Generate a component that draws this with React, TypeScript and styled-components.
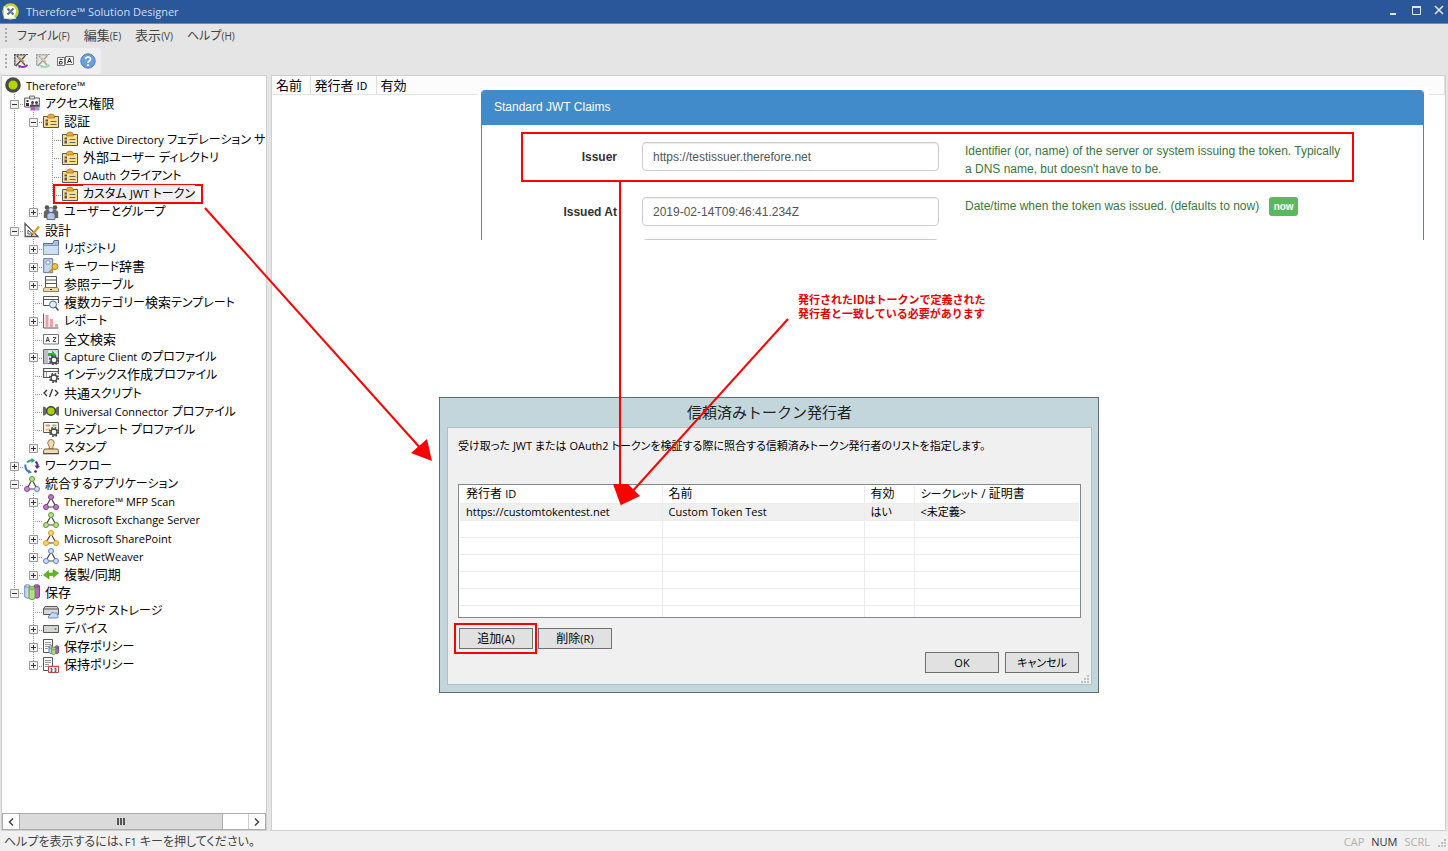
import React from "react";
import styled, { createGlobalStyle, css } from "styled-components";

const uiFont = `"Open Sans", "Noto Sans CJK JP", sans-serif`;
const jpFont = `"Noto Sans CJK JP", sans-serif`;
const webFont = `"Liberation Sans", Arial, sans-serif`;
const RED = "#ff0000";

const Global = createGlobalStyle`
  * { box-sizing: border-box; }
  body { margin: 0; font-family: ${uiFont}; font-size: 12px; color: #000; font-feature-settings: "palt"; }
  button, input { font: inherit; font-feature-settings: inherit; color: inherit; margin: 0; padding: 0; }
  svg { display: block; flex: none; }
`;

/* ---------- frame ---------- */

const Shell = styled.div`
  position: relative;
  display: flex;
  flex-direction: column;
  min-height: 100vh;
  background: #e5e5e5;
  overflow: hidden;
`;

const TitleBar = styled.header`
  display: flex;
  align-items: center;
  height: 24px;
  padding: 0 1px 0 2px;
  gap: 7px;
  background: #2a579a;
  border-bottom: 1px solid #6d8cbb;
  color: #d5deeb;
`;

const AppTitle = styled.h1`
  flex: 1;
  margin: 0;
  font-size: 11px;
  line-height: 16px;
  font-weight: 400;
`;

const WindowButtons = styled.div`
  display: flex;
  gap: 7px;
  padding-bottom: 4px;
`;

const WindowButton = styled.button`
  width: 16px;
  height: 16px;
  border: 0;
  background: none;
`;

const MenuBar = styled.nav`
  display: flex;
  align-items: center;
  height: 24px;
  padding: 0 0 2px 5px;
  gap: 14px;
`;

const MenuItem = styled.button`
  border: 0;
  background: none;
  font-family: ${jpFont};
  font-size: 13px;
  line-height: 20px;
  color: #444;
  white-space: nowrap;
`;

const Mnemonic = styled.span`
  font-family: "Open Sans", sans-serif;
  font-size: 10px;
`;

const Grip = styled.span`
  width: 2px;
  height: 14px;
  margin-right: -4px;
  background: repeating-linear-gradient(#aaa 0 2px, transparent 2px 4px);
`;

const ToolBar = styled.div`
  display: flex;
  align-items: center;
  align-self: flex-start;
  height: 26px;
  width: 101px;
  padding-left: 5px;
  gap: 6px;
  background: #efefef;
  border-radius: 3px;
  & > ${Grip} { margin-right: 0; }
`;

const ToolButton = styled.button`
  height: 16px;
  border: 0;
  background: none;
`;

const Work = styled.main`
  flex: 1;
  display: flex;
  gap: 4px;
  min-height: 0;
  margin-top: 1px;
  padding: 0 2px 0 1px;
`;

const Pane = styled.section`
  background: #fff;
  border: 1px solid #cfcfcf;
`;

const TreePane = styled(Pane)`
  display: flex;
  flex-direction: column;
  flex: 0 0 266px;
`;

const StatusBar = styled.footer`
  display: flex;
  align-items: center;
  gap: 7px;
  height: 20px;
  padding: 2px 2px 0 4px;
  background: #f0f0f0;
  color: #444;
  font-size: 12px;
  line-height: 18px;
`;

const StatusText = styled.span`flex: 1;`;
const LockKey = styled.span<{ $on?: boolean }>`
  font-size: 11px;
  color: ${(p) => (p.$on ? "#333" : "#b0b0b0")};
`;

/* ---------- tree ---------- */

const TreeList = styled.ul`
  flex: none;
  display: grid;
  grid-auto-rows: 1fr;
  height: 598px;
  margin: 0;
  padding: 0 0 0 3px;
  list-style: none;
  overflow: hidden;
`;

const Row = styled.li`
  display: flex;
  align-items: center;
  min-width: 0;
  min-height: 0;
`;

type Guide = "line" | "tee" | "end" | "none";
const dots = (dir: string) => `repeating-linear-gradient(${dir}, #999 0 1px, transparent 1px 2px)`;

const Cell = styled.span<{ $g: Guide }>`
  flex: 0 0 19px;
  align-self: stretch;
  display: flex;
  align-items: center;
  justify-content: center;
  background-repeat: no-repeat;
  ${(p) => p.$g === "line" && css`
    background-image: ${dots("to bottom")};
    background-size: 1px 100%;
    background-position: 9px 0;
  `}
  ${(p) => (p.$g === "tee" || p.$g === "end") && css`
    background-image: ${dots("to bottom")}, ${dots("to right")};
    background-size: 1px ${p.$g === "tee" ? "100%" : "50%"}, 10px 1px;
    background-position: 9px 0, 9px 10px;
  `}
`;

const Expander = styled.button`
  width: 9px;
  height: 9px;
  margin-top: 2px;
  border: 0;
  background: #fff;
`;

const Label = styled.span<{ $selected?: boolean }>`
  margin-left: 5px;
  font-size: 13px;
  line-height: 16px;
  white-space: nowrap;
  background: ${(p) => (p.$selected ? "#efefef" : "none")};
`;

const Latin = styled.span`font-size: 11px;`;
const Kana = styled.span<{ $size: number }>`font-size: ${(p) => p.$size}px;`;

const Marked = styled.span`
  flex: none;
  display: flex;
  align-items: center;
  height: 20px;
  width: 150px;
  padding-left: 7px;
  margin: -1px 0 -1px -9px;
  border: 2px solid ${RED};
`;

/* ---------- scroll bar ---------- */

const ScrollBar = styled.div`
  display: flex;
  height: 17px;
  margin-top: auto;
  border: 1px solid #ababab;
  background: #fff;
`;

const ScrollArrow = styled.button`
  display: flex;
  align-items: center;
  justify-content: center;
  width: 16px;
  border: 0;
  background: #fff;
`;

const ScrollTrack = styled.div`
  flex: 1;
  display: flex;
  border-right: 1px solid #ccc;
`;

const ScrollThumb = styled.div`
  display: flex;
  align-items: center;
  justify-content: center;
  width: 89%;
  background: #dadada;
  border: solid #ababab;
  border-width: 0 1px;
`;

/* ---------- content pane ---------- */

const ContentPane = styled(Pane)`
  position: relative;
  flex: 1;
  min-width: 0;
`;

const HeadTable = styled.table`
  width: 100%;
  height: 19px;
  border-collapse: collapse;
  table-layout: fixed;
  background: #fcfcfc;
  border-bottom: 1px solid #e5e5e5;
  th {
    padding: 0 0 0 4px;
    text-align: left;
    font: 400 13px/16px ${jpFont};
    white-space: nowrap;
    border-right: 1px solid #e0e0e0;
  }
`;

const Col = styled.col<{ $w?: number }>`
  width: ${(p) => (p.$w ? `${p.$w}px` : "auto")};
`;

const ClaimsBackdrop = styled.div`
  position: absolute;
  left: 206px;
  right: 16px;
  top: 11px;
  padding: 3px 5px 0 3px;
  background: #fff;
`;

const ClaimsCard = styled.form`
  height: 150px;
  overflow: hidden;
  border: solid #428bca;
  border-width: 0 1px;
  border-radius: 4px 4px 0 0;
  font-family: ${webFont};
  font-size: 12px;
  font-feature-settings: normal;
  background: #fff;
`;

const ClaimsTitle = styled.h2`
  margin: 0 0 7px;
  padding: 0 12px;
  font-size: 12px;
  line-height: 35px;
  font-weight: 400;
  color: #fff;
  background: #428bca;
`;

const Claim = styled.div<{ $marked?: boolean }>`
  display: grid;
  grid-template-columns: 94px 297px 1fr;
  column-gap: 25px;
  align-items: start;
  height: ${(p) => (p.$marked ? 50 : 37)}px;
  margin: 0 69px 5px 39px;
  padding: 8px 5px 0 0;
  border: 2px solid ${(p) => (p.$marked ? RED : "transparent")};
`;

const ClaimLabel = styled.label`
  font-weight: 700;
  line-height: 30px;
  text-align: right;
  color: #333;
`;

const ClaimInput = styled.input`
  width: 100%;
  height: 29px;
  padding: 0 10px;
  border: 1px solid #ccc;
  border-radius: 4px;
  color: #555;
  box-shadow: inset 0 1px 1px rgba(0, 0, 0, 0.08);
  background: #fff;
`;

const ClaimHelp = styled.p`
  display: flex;
  align-items: flex-start;
  gap: 10px;
  margin: 0;
  padding-left: 1px;
  line-height: 18px;
  color: #3c763d;
`;

const NowButton = styled.button`
  width: 29px;
  height: 19px;
  border: 0;
  border-radius: 3px;
  font-size: 10px;
  font-weight: 700;
  color: #fff;
  background: #5cb85c;
`;

const Note = styled.p`
  position: absolute;
  left: 526px;
  top: 216px;
  margin: 0;
  font: 700 11px/14px ${jpFont};
  color: #e60000;
`;

/* ---------- dialog ---------- */

const Dialog = styled.section`
  position: absolute;
  left: 167px;
  top: 321px;
  width: 660px;
  padding: 0 6px 7px 7px;
  border: 1px solid #5d6d73;
  background: #c3d6dc;
`;

const DialogTitle = styled.h2`
  margin: 0;
  padding-bottom: 2px;
  font: 400 15px/27px ${jpFont};
  text-align: center;
  color: #222;
`;

const DialogBody = styled.div`
  height: 258px;
  padding: 10px 10px 0;
  border: 1px solid #b0bfc4;
  background: #f0f0f0;
`;

const Intro = styled.p`
  margin: 0 0 30px;
  font-size: 11px;
  line-height: 16px;
  white-space: nowrap;
`;

const ListBox = styled.div`
  height: 134px;
  padding: 1px;
  border: 1px solid #828790;
  overflow: hidden;
  background: #fff;
`;

const IssuerTable = styled.table`
  width: 100%;
  border-collapse: collapse;
  table-layout: fixed;
  line-height: 16px;
  th, td {
    height: 17px;
    padding: 0 0 0 6px;
    text-align: left;
    font-weight: 400;
    white-space: nowrap;
    border-right: 1px solid #ececec;
    border-bottom: 1px solid #ececec;
  }
  th:last-child, td:last-child { border-right: 0; }
`;

const IssuerRow = styled.tr<{ $selected?: boolean }>`
  font-size: 11px;
  background: ${(p) => (p.$selected ? "#f0f0f0" : "none")};
`;

const Actions = styled.div<{ $end?: boolean }>`
  display: flex;
  gap: ${(p) => (p.$end ? 6 : 1)}px;
  justify-content: ${(p) => (p.$end ? "flex-end" : "flex-start")};
  margin: ${(p) => (p.$end ? "-2px 2px 0 0" : "5px 0 0 -4px")};
`;

const MarkedAction = styled.span<{ $marked?: boolean }>`
  display: inline-flex;
  padding: ${(p) => (p.$marked ? "3px 2px 3px 3px" : "5px 0")};
  border: ${(p) => (p.$marked ? `2px solid ${RED}` : 0)};
`;

const PushButton = styled.button`
  width: 74px;
  height: 21px;
  border: 1px solid #707070;
  background: #e1e1e1;
  font-size: 12px;
  line-height: 16px;
`;

const SizeGrip = styled.span`
  display: flex;
  justify-content: flex-end;
  margin: 1px -8px 0 0;
`;

const Arrows = styled.svg`
  position: absolute;
  inset: 0;
  width: 100%;
  height: 100%;
  pointer-events: none;
`;

/* ---------- icons ---------- */

const S = "#555";

const Badge = () => (
  <>
    <path d="M.5 3.500h15v11H.5z" fill="#ffdf8c" stroke={S} />
    <path d="M4.500 3.500Q5 1 8 1t3.500 2.500V5h-7z" fill="#f0a63c" stroke="#9a6a20" strokeWidth=".7" />
    <path d="M2.500 6.500h2.500v2H2.500zM2.500 9.500h2.500v3H2.500z" fill="#555" />
    <path d="M7.500 8.500h6M7.500 11.500h6" stroke="#666" />
  </>
);

const Gear = ({ x = 11, y = 11 }: { x?: number; y?: number }) => (
  <g>
    <circle cx={x} cy={y} r="4.300" fill="none" stroke="#444" strokeWidth="1.600" strokeDasharray="1.700 1.700" />
    <circle cx={x} cy={y} r="3" fill="#fff" stroke="#444" strokeWidth="1.400" />
  </g>
);

const Nodes = ({ a, b, c, line }: { a: string; b: string; c: string; line: string[] }) => (
  <>
    <path d="M7 5.500 4 11M9 5.500l3 5.500M6 13h4" stroke="#444" strokeWidth="1.200" />
    <circle cx="8" cy="3" r="2.500" fill={a} stroke={line[0]} />
    <circle cx="3" cy="13" r="2.500" fill={b} stroke={line[1]} />
    <circle cx="13" cy="13" r="2.500" fill={c} stroke={line[2]} />
  </>
);

const Cylinder = ({ x, y, w, h, fill, stroke }: { x: number; y: number; w: number; h: number; fill: string; stroke: string }) => (
  <g fill={fill} stroke={stroke} strokeWidth=".9">
    <path d={`M${x} ${y}v${h}q${w / 2} 2.500 ${w} 0v${-h}`} />
    <ellipse cx={x + w / 2} cy={y} rx={w / 2} ry="1.300" />
  </g>
);

const Page = () => (
  <>
    <path d="M.500.500h9v13h-9z" fill="#fff" stroke={S} />
    <path d="M2 3.500h6M2 5.500h6M2 7.500h4M2 9.500h3" stroke="#999" />
  </>
);

const icons: Record<string, React.ReactNode> = {
  therefore: <circle cx="8" cy="8" r="6.200" fill="#b5d500" stroke="#4a4a42" strokeWidth="3.200" />,
  access: (
    <>
      <path d="M.7 3h14.600v9H.7z" fill="#fff" stroke={S} />
      <path d="M5.500 1h5v3h-5z" fill="#ddd" stroke={S} strokeWidth=".8" />
      <path d="M2.500 5h2v2h-2zM2 8h3v3H2z" fill="#333" />
      <circle cx="8.500" cy="7.500" r="1.500" fill="#444" /><circle cx="12.500" cy="7.500" r="1.500" fill="#444" />
      <path d="M6.500 11h4.500v4.500H6.500z" fill="#b45bb8" /><path d="M11 11h4.500v4.500H11z" fill="#86a8dc" />
      <path d="M6 11.500V10q2-1.500 4.500 0 2.500-1.500 4.500 0v1.500z" fill="#444" />
    </>
  ),
  badge: <Badge />,
  users: (
    <>
      <path d="M.8 14V8.500Q1 6 3.500 6h9q2.500 0 2.700 2.500V14z" fill="#666" />
      <circle cx="4" cy="3.600" r="2.300" fill="#555" /><circle cx="12" cy="3.600" r="2.300" fill="#555" />
      <path d="M4 15.500V11q0-2.500 4-2.500t4 2.500v4.500z" fill="#a9c7ea" stroke="#556" strokeWidth=".8" />
      <circle cx="8" cy="6" r="2.500" fill="#d9e6f5" stroke="#556" strokeWidth=".8" />
    </>
  ),
  design: (
    <>
      <path d="M1 1.500 1.200 14.500H14z" fill="#fff" stroke={S} strokeWidth="1.300" />
      <path d="M4 8v4h4.500z" fill="#fff" stroke={S} />
      <path d="M15 4.500 8 13" stroke="#d8973c" strokeWidth="2.200" /><path d="m8.600 12-1.800 2.500" stroke="#444" />
    </>
  ),
  folder: (
    <>
      <path d="M.500 14.500V3.500H10l1-3h4.500v14z" fill="#a9c3e6" stroke="#54708f" />
      <path d="M.500 5.500h15v9H.500z" fill="#cfdff3" stroke="#7d97bb" />
    </>
  ),
  keyword: (
    <>
      <path d="M.700.700h9v14h-9z" fill="#c6d8f0" stroke="#5e7596" /><path d="M3 3h4v3H3z" fill="#fff" stroke="#5e7596" strokeWidth=".7" />
      <circle cx="12" cy="8.500" r="3" fill="#f5c542" stroke="#8d6a1a" strokeWidth=".8" />
      <path d="m10 10.500-4 4" stroke="#c79422" strokeWidth="1.800" />
    </>
  ),
  lookup: (
    <>
      <path d="M2.500.500h11v11h-11z" fill="#fff" stroke={S} /><path d="M2.500 4h11M2.500 7.500h11" stroke={S} />
      <path d="M2 11.500h12l1.500 1v3H.500v-3z" fill="#eed7a2" stroke="#8d7440" strokeWidth=".9" /><path d="M7 13.500h2" stroke="#333" />
    </>
  ),
  search: (
    <>
      <path d="M6 10.500H.500v-9h15V8M.500 4.500h15" fill="none" stroke={S} />
      <circle cx="10" cy="9.500" r="3.500" fill="#dfeaf7" stroke="#54708f" /><path d="m12.500 12 3 3.500" stroke="#444" strokeWidth="1.500" />
    </>
  ),
  report: (
    <>
      <path d="M2.500 2h3v12h-3zM7 6h3v8H7zM12 11h3v3h-3z" fill="#f0a09f" />
      <path d="M.600.500v14.500h15" fill="none" stroke={S} />
    </>
  ),
  az: (
    <>
      <path d="M.500 3.500h15v9.500H.500z" fill="#fff" stroke="#777" />
      <path d="m3 11 1.700-5L6.500 11M3.500 9.500H6M10 6.500h3L10 10.500h3" fill="none" stroke="#333" strokeWidth=".9" />
    </>
  ),
  capture: (
    <>
      <path d="M.600.600h14.800v14H.600z" fill="#dce6f3" stroke={S} /><path d="M1 1h4v13.500H1z" fill="#b9bfc7" />
      <path d="M5 4h4V1.500l4 4-4 4V7H5z" fill="#35b21f" /><Gear />
    </>
  ),
  indexing: (<><path d="M7 10.500H.600V1.500h14.800V7M1 4.500h14" fill="none" stroke={S} strokeWidth="1.200" /><path d="M3.500 5v5" stroke="#999" /><Gear /></>),
  script: (
    <path d="M4 5 1 8l3 3M12 5l3 3-3 3M9.500 4l-3 8" fill="none" stroke="#333" strokeWidth="1.300" />
  ),
  connector: (
    <>
      <path d="M0 3.500q3 0 3 2h2v5H3q0 2-3 2z" fill="#666" /><path d="M16 3.500q-3 0-3 2h-2v5h2q0 2 3 2z" fill="#666" />
      <circle cx="8" cy="8" r="4.300" fill="#a8cf10" stroke="#444" strokeWidth="1.400" />
    </>
  ),
  template: (
    <>
      <path d="M.600 1.500h14.800v10H.600z" fill="#fff" stroke={S} />
      <path d="M2.500 3.500h4.500v2H2.500z" fill="#e98585" /><path d="M9 3.500h4.500v2H9z" fill="#9cc653" /><path d="M2.500 7.500H7v2H2.500z" fill="#f2c04c" />
      <Gear />
    </>
  ),
  stamp: (
    <>
      <path d="M6 10q1-2-.5-4T5 3q.5-2.500 3-2.500T11 3q.5 1.500-.5 3T10 10z" fill="#f1dcb2" stroke="#86683a" strokeWidth=".9" />
      <path d="M.600 14.500v-3q0-1.500 1.500-1.500h12q1.300 0 1.300 1.500v3z" fill="#f1dcb2" stroke="#6d5836" /><path d="M0 14.800h16" stroke="#444" />
    </>
  ),
  workflow: (
    <>
      <path d="M3 4.500Q5 1.800 8.500 2.200" fill="none" stroke="#29a36a" strokeWidth="2" /><path d="m7.500 0 3.500 2.500-3.500 2.500z" fill="#29a36a" />
      <path d="M11.500 3.500q2.500 2 2 5" fill="none" stroke="#6b1fa0" strokeWidth="2" /><path d="m10.500 7.500 5.500.5-3 3z" fill="#6b1fa0" />
      <path d="M1.500 6.500q-.800 5 3.500 7.500" fill="none" stroke="#3d77c4" strokeWidth="2" /><path d="m4.500 11.500 3.500 3-4 1z" fill="#3d77c4" />
      <circle cx="11.500" cy="13.500" r="1.300" fill="#333" />
    </>
  ),
  apps: <Nodes a="#b7e08a" b="#c98ad0" c="#c9dcf5" line={["#5a9a35", "#8a3f93", "#5d81b5"]} />,
  mfp: <Nodes a="#c07ac8" b="#c07ac8" c="#c07ac8" line={["#7d3a86", "#7d3a86", "#7d3a86"]} />,
  exchange: <Nodes a="#b7e08a" b="#b7e08a" c="#b7e08a" line={["#5a9a35", "#5a9a35", "#5a9a35"]} />,
  sharepoint: <Nodes a="#ffd45e" b="#ffd45e" c="#ffd45e" line={["#e0972a", "#e0972a", "#e0972a"]} />,
  sap: <Nodes a="#cfdff5" b="#cfdff5" c="#cfdff5" line={["#5d81b5", "#5d81b5", "#5d81b5"]} />,
  sync: <path d="m.500 9 5-4.500V7H10V3.500L15.500 7l-5 4.500V9.500H6V13z" fill="#5cb81c" stroke="#3c8a10" strokeWidth=".5" />,
  storage: (
    <>
      <Cylinder x={.7} y={2} w={5.500} h={11} fill="#c4d7f0" stroke="#6a86b0" />
      <Cylinder x={10} y={2} w={5.500} h={11} fill="#b565bb" stroke="#7d3a86" />
      <Cylinder x={5} y={4} w={6} h={10.500} fill="#b5dd86" stroke="#5a9a35" />
    </>
  ),
  cloud: (
    <>
      <path d="M2 3.500h12l1.500 2.500v5.500H.500V6z" fill="#d8d8d8" stroke={S} /><path d="M.500 6h15" stroke={S} />
      <path d="M5.500 15q-1-2.500 1.500-3 1.500-4 4.500-2 3.500-1 3 2 1.500 1.500 0 3z" fill="#c5dbf5" stroke="#5d81b5" strokeWidth=".9" />
    </>
  ),
  device: (<><path d="M.500 4.500h15v7H.500z" fill="#d5d5d5" stroke={S} /><circle cx="12.500" cy="8" r="1" fill="#3aa04a" /></>),
  retain: (
    <>
      <Page />
      <Cylinder x={6} y={8} w={3.500} h={5.500} fill="#c4d7f0" stroke="#55749f" />
      <Cylinder x={12} y={8} w={3.500} h={5.500} fill="#b565bb" stroke="#7d3a86" />
      <Cylinder x={8.700} y={9.500} w={4} h={5} fill="#b5dd86" stroke="#5a9a35" />
    </>
  ),
  hold: (
    <>
      <Page />
      <path d="M5.500 9.500h10v6h-10z" fill="#fff" stroke="#b84848" /><path d="M5 9.500h11" stroke="#d34a4a" strokeWidth="1.500" />
      <path d="M7.500 11.500H9v3H7.500M11.500 11.500H13v3h-1.500M7.500 13H9M11.500 13H13" fill="none" stroke="#333" strokeWidth=".8" />
    </>
  ),
};

const Icon = ({ name }: { name: string }) => (
  <svg width="16" height="16" viewBox="0 0 16 16" aria-hidden="true" fill="none">
    {icons[name]}
  </svg>
);

const Drafting = ({ arrow, faded }: { arrow: string; faded?: boolean }) => (
  <svg width="16" height="16" viewBox="0 0 16 16" fill="none" opacity={faded ? 0.5 : 1}>
    <path d="M1 1.500h14M1.500 1v12" stroke="#555" strokeDasharray="2 1" />
    <path d="M2 2v11L13 2z" fill="#ddd" stroke="#666" />
    <path d="m4 3 8 9M12 3l-9 10" stroke="#555" strokeWidth="1.300" />
    <path d="m5 4 6 5" stroke="#c79a52" strokeWidth="2" />
    <path d="M6.500 13q4 2.500 8-1" stroke={arrow} strokeWidth="1.800" />
    <path d="m5 11.500 1 4 2.500-2.500z" fill={arrow} />
  </svg>
);

/* ---------- data ---------- */

type Node = { id: string; icon: string; label: string; guides: Guide[]; box?: "+" | "-"; marked?: boolean };

const n = (id: string, icon: string, label: string, g: string, box?: "+" | "-", marked = false): Node => ({
  id, icon, label, box, marked,
  guides: g.split("").map((c) => ({ l: "line", t: "tee", e: "end", n: "none" } as Record<string, Guide>)[c]),
});

const tree: Node[] = [
  n("root", "therefore", "Therefore™", ""),
  n("access", "access", "アクセス権限", "t", "-"),
  n("auth", "badge", "認証", "lt", "-"),
  n("adfs", "badge", "Active Directory フェデレーション サ", "llt"),
  n("ext", "badge", "外部ユーザー ディレクトリ", "llt"),
  n("oauth", "badge", "OAuth クライアント", "llt"),
  n("jwt", "badge", "カスタム JWT トークン", "lle", undefined, true),
  n("users", "users", "ユーザーとグループ", "le", "+"),
  n("design", "design", "設計", "t", "-"),
  n("repo", "folder", "リポジトリ", "lt", "+"),
  n("keyword", "keyword", "キーワード辞書", "lt", "+"),
  n("lookup", "lookup", "参照テーブル", "lt", "+"),
  n("multi", "search", "複数カテゴリー検索テンプレート", "lt"),
  n("report", "report", "レポート", "lt", "+"),
  n("full", "az", "全文検索", "lt"),
  n("capture", "capture", "Capture Client のプロファイル", "lt", "+"),
  n("index", "indexing", "インデックス作成プロファイル", "lt"),
  n("script", "script", "共通スクリプト", "lt"),
  n("uc", "connector", "Universal Connector プロファイル", "lt"),
  n("tmpl", "template", "テンプレート プロファイル", "lt"),
  n("stamp", "stamp", "スタンプ", "le", "+"),
  n("flow", "workflow", "ワークフロー", "t", "+"),
  n("apps", "apps", "統合するアプリケーション", "t", "-"),
  n("mfp", "mfp", "Therefore™ MFP Scan", "lt", "+"),
  n("exch", "exchange", "Microsoft Exchange Server", "lt"),
  n("sp", "sharepoint", "Microsoft SharePoint", "lt", "+"),
  n("sap", "sap", "SAP NetWeaver", "lt", "+"),
  n("sync", "sync", "複製/同期", "le", "+"),
  n("store", "storage", "保存", "e", "-"),
  n("cloud", "cloud", "クラウド ストレージ", "nt"),
  n("device", "device", "デバイス", "nt", "+"),
  n("retain", "retain", "保存ポリシー", "nt", "+"),
  n("hold", "hold", "保持ポリシー", "ne", "+"),
];

/* Kanji keep the size of the parent; kana runs take the given size and Latin words their own. */
const mixed = (text: string, kana: number) =>
  text.split(/([A-Za-z0-9™()]+(?: [A-Za-z0-9™()]+)*|[ぁ-ヿ]+(?: [ぁ-ヿ]+)*)/).map((part, i) => {
    if (i % 2 === 0) return part;
    return /^[A-Z0-9(]/i.test(part) ? <Latin key={i}>{part}</Latin> : <Kana key={i} $size={kana}>{part}</Kana>;
  });

const TreeRow = ({ node }: { node: Node }) => {
  const body = (
    <>
      <Icon name={node.icon} />
      <Label $selected={node.marked}>{mixed(node.label, 12)}</Label>
    </>
  );
  return (
    <Row>
      {node.guides.map((g, i) => (
        <Cell key={i} $g={g}>
          {node.box && i === node.guides.length - 1 && (
            <Expander aria-label={`${node.label} ${node.box}`}>
              <svg width="9" height="9" viewBox="0 0 9 9" fill="none">
                <path d="M.5.5h8v8h-8z" fill="#f4f4f4" stroke="#999" />
                <path d={node.box === "+" ? "M2 4.500h5M4.500 2v5" : "M2 4.500h5"} stroke="#333" />
              </svg>
            </Expander>
          )}
        </Cell>
      ))}
      {node.marked ? <Marked>{body}</Marked> : body}
    </Row>
  );
};

const GripDots = () => (
  <svg width="9" height="9" viewBox="0 0 9 9" fill="#c0c0c0">
    <path d="M7 1h2v2H7zM4 4h2v2H4zM7 4h2v2H7zM1 7h2v2H1zM4 7h2v2H4zM7 7h2v2H7z" />
  </svg>
);

const menus = [["ファイル", "(F)"], ["編集", "(E)"], ["表示", "(V)"], ["ヘルプ", "(H)"]];

export default function App() {
  return (
    <>
      <Global />
      <Shell>
        <TitleBar>
          <svg width="17" height="17" viewBox="0 0 17 17" fill="none">
            <circle cx="8.500" cy="8.500" r="7" fill="#fff" stroke="#bfd730" strokeWidth="2.600" />
            <path d="M2 3v12.500h12z" fill="#fff" stroke="#ddd" strokeWidth=".6" />
            <path d="m5.500 5.500 6 6M11.500 5.500l-6 6" stroke="#667" strokeWidth="2" /><path d="m7 7 3 3" stroke="#5a8fd0" strokeWidth="2" />
          </svg>
          <AppTitle>Therefore™ Solution Designer</AppTitle>
          <WindowButtons>
            <WindowButton aria-label="最小化"><svg width="16" height="16" fill="none"><path d="M5 12h6" stroke="#dfe6f0" strokeWidth="2" /></svg></WindowButton>
            <WindowButton aria-label="最大化"><svg width="16" height="16" fill="none"><path d="M4.500 4.500h8v8h-8z" stroke="#dfe6f0" /><path d="M4 5h9" stroke="#dfe6f0" strokeWidth="2" /></svg></WindowButton>
            <WindowButton aria-label="閉じる"><svg width="16" height="16" fill="none"><path d="m4 4 8 8M12 4l-8 8" stroke="#dfe6f0" strokeWidth="1.600" /></svg></WindowButton>
          </WindowButtons>
        </TitleBar>

        <MenuBar>
          <Grip />
          {menus.map(([name, key]) => (
            <MenuItem key={key}>{mixed(name, 12)}<Mnemonic>{key}</Mnemonic></MenuItem>
          ))}
        </MenuBar>

        <ToolBar>
          <Grip />
          <ToolButton aria-label="デザインを開く"><Drafting arrow="#9a2fb5" /></ToolButton>
          <ToolButton aria-label="デザインを保存"><Drafting arrow="#4dbb7a" faded /></ToolButton>
          <ToolButton aria-label="言語">
            <svg width="17" height="16" viewBox="0 0 17 16" fill="none">
              <path d="M.5 4.500h7v8h-7zM8.500 3.500h8v8h-8z" fill="#f7f7f7" stroke="#777" />
              <path d="M2.500 6.500h3M2.500 8.500H5q1 1.500-.5 2.500H2.500zM10.500 10l2-5 2 5M11 8.500h3" stroke="#333" />
            </svg>
          </ToolButton>
          <ToolButton aria-label="ヘルプ">
            <svg width="16" height="16" viewBox="0 0 16 16" fill="none">
              <circle cx="8" cy="8" r="7.200" fill="#6a9fdc" stroke="#4a7fc0" />
              <path d="M5.500 6.200Q5.700 4 8 4t2.500 2q0 1.300-1.300 2Q8 8.700 8 10" stroke="#fff" strokeWidth="1.700" /><path d="M7.100 11.200h1.800V13H7.100z" fill="#fff" />
            </svg>
          </ToolButton>
        </ToolBar>

        <Work>
          <TreePane>
            <TreeList>{tree.map((node) => <TreeRow key={node.id} node={node} />)}</TreeList>
            <ScrollBar>
              <ScrollArrow aria-label="左へ"><svg width="6" height="8" fill="none"><path d="M5 .5 1.500 4 5 7.500" stroke="#444" strokeWidth="1.500" /></svg></ScrollArrow>
              <ScrollTrack>
                <ScrollThumb><svg width="8" height="7"><path d="M0 0h2v7H0zM3 0h2v7H3zM6 0h2v7H6z" fill="#555" /></svg></ScrollThumb>
              </ScrollTrack>
              <ScrollArrow aria-label="右へ"><svg width="6" height="8" fill="none"><path d="M1 .5 4.500 4 1 7.500" stroke="#444" strokeWidth="1.500" /></svg></ScrollArrow>
            </ScrollBar>
          </TreePane>

          <ContentPane>
            <HeadTable>
              <colgroup><Col $w={38} /><Col $w={66} /><Col /></colgroup>
              <thead><tr><th>名前</th><th>発行者 <Latin>ID</Latin></th><th>有効</th></tr></thead>
            </HeadTable>

            <ClaimsBackdrop>
              <ClaimsCard>
                <ClaimsTitle>Standard JWT Claims</ClaimsTitle>
                <Claim $marked>
                  <ClaimLabel htmlFor="iss">Issuer</ClaimLabel>
                  <ClaimInput id="iss" defaultValue="https://testissuer.therefore.net" />
                  <ClaimHelp>Identifier (or, name) of the server or system issuing the token. Typically a DNS name, but doesn't have to be.</ClaimHelp>
                </Claim>
                <Claim>
                  <ClaimLabel htmlFor="iat">Issued At</ClaimLabel>
                  <ClaimInput id="iat" defaultValue="2019-02-14T09:46:41.234Z" />
                  <ClaimHelp>Date/time when the token was issued. (defaults to now)<NowButton type="button">now</NowButton></ClaimHelp>
                </Claim>
                <Claim>
                  <span />
                  <ClaimInput aria-label="Expiration" />
                </Claim>
              </ClaimsCard>
            </ClaimsBackdrop>

            <Note>発行されたIDはトークンで定義された<br />発行者と一致している必要があります</Note>

            <Dialog role="dialog" aria-labelledby="dlg">
              <DialogTitle id="dlg">信頼済みトークン発行者</DialogTitle>
              <DialogBody>
                <Intro>{mixed("受け取った JWT または OAuth2 トークンを検証する際に照合する信頼済みトークン発行者のリストを指定します。", 11)}</Intro>
                <ListBox>
                  <IssuerTable>
                    <colgroup><Col $w={202} /><Col $w={202} /><Col $w={50} /><Col /></colgroup>
                    <thead><tr><th>発行者 <Latin>ID</Latin></th><th>名前</th><th>有効</th><th>{mixed("シークレット / 証明書", 11)}</th></tr></thead>
                    <tbody>
                      <IssuerRow $selected><td>https://customtokentest.net</td><td>Custom Token Test</td><td>はい</td><td>&lt;未定義&gt;</td></IssuerRow>
                      {[1, 2, 3, 4, 5, 6].map((i) => <IssuerRow key={i}><td /><td /><td /><td /></IssuerRow>)}
                    </tbody>
                  </IssuerTable>
                </ListBox>
                <Actions>
                  <MarkedAction $marked><PushButton>追加<Latin>(A)</Latin></PushButton></MarkedAction>
                  <MarkedAction><PushButton>削除<Latin>(R)</Latin></PushButton></MarkedAction>
                </Actions>
                <Actions $end>
                  <PushButton><Latin>OK</Latin></PushButton>
                  <PushButton>{mixed("キャンセル", 11)}</PushButton>
                </Actions>
                <SizeGrip><GripDots /></SizeGrip>
              </DialogBody>
            </Dialog>
          </ContentPane>
        </Work>

        <StatusBar>
          <StatusText>{mixed("ヘルプを表示するには、F1 キーを押してください。", 12)}</StatusText>
          <LockKey>CAP</LockKey>
          <LockKey $on>NUM</LockKey>
          <LockKey>SCRL</LockKey>
          <GripDots />
        </StatusBar>

        <Arrows fill="none" aria-hidden="true">
          <g stroke={RED} strokeWidth="2">
            <path d="M205 208 422 450" /><path d="M620 182V490" /><path d="M788 319 630 494" />
          </g>
          <path d="m432 461-21-8 16-14zM621 506l-8-22h15zM621 505l7-21 12 12z" fill={RED} />
        </Arrows>
      </Shell>
    </>
  );
}
